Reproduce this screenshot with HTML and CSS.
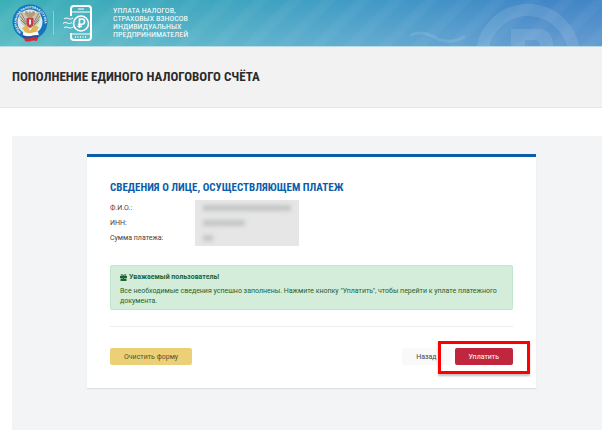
FILE: index.html
```html
<!DOCTYPE html>
<html lang="ru">
<head>
<meta charset="utf-8">
<meta name="viewport" content="width=device-width, initial-scale=1">
<title>Пополнение единого налогового счёта</title>
<link rel="stylesheet" href="styles.css">
</head>
<body>
<header class="site-header">
  <svg class="watermark" viewBox="0 0 202 46" aria-hidden="true">
    <circle cx="128" cy="56" r="46" fill="none" stroke="#fff" stroke-width="12"/>
    <path d="M111 29h27q15 0 15 17h-13q0-6-6-6h-9v6h-14z" fill="#fff"/>
    <path d="M11 35c8-4 18-1 25 3s18 5 28-1" fill="none" stroke="#fff" stroke-width="3" stroke-linecap="round"/>
  </svg>
  <svg class="emblem" viewBox="0 0 36 38" aria-hidden="true">
    <defs><path id="ring" d="M9 28.500A14 14 0 1 1 28.500 28"/></defs>
    <circle cx="18" cy="18" r="17.500" fill="#1673bd"/>
    <circle cx="18" cy="18" r="12.500" fill="#d9edf0"/>
    <text class="emblem-text"><textPath href="#ring">ФЕДЕРАЛЬНАЯ НАЛОГОВАЯ СЛУЖБА</textPath></text>
    <path d="M16 14C14 9 11 7 8 8c-1 4-1 9 3 13l4 3h6l4-3c4-4 4-9 3-13-3-1-6 1-8 6z" fill="#c9c6b4"/>
    <path d="M9 9l5 9M8 12l6 8M9 16l6 6M27 9l-5 9M28 12l-6 8M27 16l-6 6" stroke="#817566" stroke-width=".8"/>
    <path d="M15 12c-3-1-3-5 0-5l2 2 1-3 1 3 2-2c3 0 3 4 0 5l-1 3h-4z" fill="#b49c79"/>
    <path d="M10 24l5-3 3 6 4-6 5 2-3 5-6 2-5-2z" fill="#e2b64e"/>
    <path d="M14.500 14h7v6q0 2-3.500 4-3.500-2-3.500-4z" fill="#c63a47"/>
    <path d="M17 15.500h2v5h-2z" fill="#eee"/>
    <path d="M11 28q4 2 8 1t7-1l1 4q-5-1-8 0t-8 0z" fill="#fff"/>
    <path d="M11 31q4 2 8 1t8-1l-1 3q-4-1-7 0t-8 0z" fill="#2450a5"/>
    <path d="M12 34q4 1 7 0t7 0l-1 3q-3-1-6 0t-6 0z" fill="#dc2832"/>
  </svg>
  <span class="divider"></span>
  <svg class="phone" viewBox="0 0 32 36" fill="none" stroke="#fff" aria-hidden="true">
    <path d="M9 11V4q0-3 3-3h14q3 0 3 3v28q0 3-3 3H12q-3 0-3-3v-4" stroke-width="2"/>
    <path d="M9 7h20M9 29h20M16 4h6" stroke-width="1.200"/>
    <path d="M13 32h12" stroke-width="1.500" stroke-dasharray="1 1.500"/>
    <circle cx="19" cy="18.500" r="7.500" stroke-width="1.600"/>
    <path d="M17.500 23v-9H20a2.500 2.500 0 0 1 0 5.200h-4M15.500 21.200H20" stroke-width="1.600"/>
    <path d="M2 14c3-3 5 2 9-1M1 18.500c3-3 5 2 9-1M2 23c3-3 5 2 9-1"/>
  </svg>
  <p class="site-name">УПЛАТА НАЛОГОВ,<br>СТРАХОВЫХ ВЗНОСОВ<br>ИНДИВИДУАЛЬНЫХ<br>ПРЕДПРИНИМАТЕЛЕЙ</p>
</header>

<div class="title-band"><h1>ПОПОЛНЕНИЕ ЕДИНОГО НАЛОГОВОГО СЧЁТА</h1></div>

<main class="panel">
  <section class="card">
    <h2>СВЕДЕНИЯ О ЛИЦЕ, ОСУЩЕСТВЛЯЮЩЕМ ПЛАТЕЖ</h2>
    <div class="details">
      <dl class="labels">
        <dt>Ф.И.О.:</dt>
        <dt>ИНН:</dt>
        <dt>Сумма платежа:</dt>
      </dl>
      <div class="redacted">
        <span class="smear smear-long"></span>
        <span class="smear smear-mid"></span>
        <span class="smear smear-short"></span>
      </div>
    </div>
    <div class="alert" role="status">
      <p class="alert-title">
        <svg class="gift" viewBox="0 0 14 14" fill="currentColor" aria-hidden="true">
          <path d="M0 4h6v4H0zM8 4h6v4H8zM1 9h5v5H1zM8 9h5v5H8zM6 4h2v10H6z"/>
          <path d="M7 4C1 5 1 0 4 1q2 0 3 3 1-3 3-3c3-1 3 4-3 3" fill="none" stroke="currentColor" stroke-width="1.500"/>
        </svg>
        <strong>Уважаемый пользователь!</strong>
      </p>
      <p>Все необходимые сведения успешно заполнены. Нажмите кнопку "Уплатить", чтобы перейти к уплате платежного документа.</p>
    </div>
    <hr>
    <div class="actions">
      <button type="button" class="btn btn-clear">Очистить форму</button>
      <button type="button" class="btn btn-back">Назад</button>
      <div class="pay-wrap">
        <button type="button" class="btn btn-pay">Уплатить</button>
        <span class="highlight"></span>
      </div>
    </div>
  </section>
</main>
</body>
</html>
```
FILE: styles.css
```css
* { box-sizing: border-box; }

body {
  margin: 0;
  background: #fff;
  color: #444;
  font: 7px/10px Roboto, "Open Sans", sans-serif;
}

h1, h2, p, dl { margin: 0; }

.site-header {
  position: relative;
  display: flex;
  align-items: center;
  height: 47px;
  padding: 0 12px;
  overflow: hidden;
  border-bottom: 1px solid #b9dce6;
  background:
    repeating-linear-gradient(135deg, rgba(255, 255, 255, 0) 0 10px, rgba(255, 255, 255, .04) 14px 20px, rgba(255, 255, 255, 0) 24px),
    linear-gradient(rgba(255, 255, 255, 0), rgba(255, 255, 255, .18)),
    linear-gradient(100deg, #3bb0b7, #3fa5c0 38%, #4199c6 62%, #4286c6 90%);
}

.watermark {
  position: absolute;
  right: 0;
  bottom: 0;
  width: 202px;
  height: 46px;
  opacity: .1;
}

.emblem { width: 36px; height: 38px; }

.emblem-text {
  fill: #fff;
  font: bold 3px "Open Sans", sans-serif;
}

.divider {
  width: 1px;
  height: 24px;
  margin: 0 8px 0 5px;
  background: #8fd0d6;
}

.phone { width: 32px; height: 36px; }

.site-name {
  margin-left: 19px;
  color: #fff;
  font: 8px/8px "Liberation Sans Narrow", "Roboto Condensed", Roboto, sans-serif;
}

.title-band {
  padding: 20px 12px;
  border-bottom: 1px solid #e6e6e6;
  background: #f2f2f2;
}

h1 {
  color: #2b2b2b;
  font: bold 13px/20px "Liberation Sans Narrow", "Roboto Condensed", Roboto, sans-serif;
}

.panel {
  margin: 28px 0 0 12px;
  padding: 18px 66px 42px 75px;
  background: #f3f4f6;
}

.card {
  padding: 23px;
  border-top: 3px solid #0a5dab;
  background: #fff;
  box-shadow: 0 1px 1px #dfe0e2;
}

h2 {
  color: #0a5dab;
  font: bold 11px/16px "Liberation Sans Narrow", "Roboto Condensed", Roboto, sans-serif;
}

.details {
  display: flex;
  margin-top: 4px;
}

.labels {
  width: 85px;
  padding-top: 1px;
  line-height: 15px;
}

.redacted {
  display: flex;
  flex-direction: column;
  gap: 9px;
  width: 104px;
  padding: 5px 8px;
  background: #e6e6e6;
}

.smear {
  height: 6px;
  background: #c2c4c4;
  filter: blur(2px);
}

.smear-long { width: 88px; }
.smear-mid { width: 42px; }
.smear-short { width: 10px; }

.alert {
  margin-top: 19px;
  padding: 6px 9px 3px;
  border: 1px solid #c3e6cb;
  border-radius: 2px;
  background: #d4edda;
  color: #1c6330;
}

.alert-title {
  display: flex;
  align-items: center;
  gap: 2px;
  margin-bottom: 4px;
}

.gift { width: 7px; height: 7px; }

hr {
  height: 1px;
  margin: 16px 0 21px;
  border: 0;
  background: #eee;
}

.actions { display: flex; }

.btn {
  height: 17px;
  padding: 0 14px;
  border: 0;
  border-radius: 2px;
  font: inherit;
}

.btn-clear {
  margin-right: auto;
  background: #ebd077;
  color: #5b5026;
}

.btn-back {
  margin-right: 4px;
  background: #f9f9f9;
  color: #444;
}

.pay-wrap { position: relative; }

.btn-pay {
  background: #c0273f;
  color: #fff;
}

.highlight {
  position: absolute;
  inset: -7px -17px -9px;
  border: 3px solid #f00;
  box-shadow: 0 2px 2px rgba(0, 0, 0, .25);
  pointer-events: none;
}
```
